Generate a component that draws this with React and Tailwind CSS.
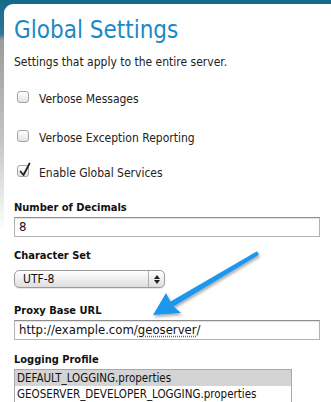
import React from "react"

const font = { fontFamily: '"DejaVu Sans Condensed", "Liberation Sans", Arial, sans-serif' }

const Checkbox = ({ checked }) => (
  <div className="relative w-[12px] h-[12px] shrink-0 rounded-[3px] border border-[#a3a3a3] bg-gradient-to-b from-white to-[#e3e3e3] shadow-[inset_0_1px_0_#fff]">
    {checked && (
      <svg className="absolute left-[0px] top-[-4px]" width="14" height="15" viewBox="0 0 14 15">
        <path d="M2.5 9.5 L5.5 13 L11.5 1.5" fill="none" stroke="#222" strokeWidth="1.8" strokeLinecap="round" strokeLinejoin="round" />
      </svg>
    )}
  </div>
)

const CheckRow = ({ label, checked, className }) => (
  <div className={"flex items-start h-[16px] pl-[3px] " + (className || "")}>
    <Checkbox checked={checked} />
    <span className="ml-[10px] text-[12px] leading-[16px] text-[#222]">{label}</span>
  </div>
)

const Label = ({ children, className }) => (
  <div className={"text-[11px] leading-[14px] font-bold text-[#111] " + (className || "")}>{children}</div>
)

const TextBox = ({ children, className }) => (
  <div className={"h-[20px] w-[306px] border border-[#b3b3b3] border-t-[#8e8e8e] shadow-[inset_0_1px_1px_rgba(0,0,0,0.12)] flex items-center pl-[4px] text-[13px] text-[#111] " + (className || "")}>
    {children}
  </div>
)

export default function App() {
  return (
    <div className="relative w-[331px] h-[402px] overflow-hidden bg-white flex" style={font}>
      <div className="w-[4px] shrink-0 bg-[linear-gradient(to_bottom,#17698a_0px,#2b7897_34px,#9c9c9c_40px,#c4c4c4_140px,#ffffff_230px)]" />
      <div className="flex-1 bg-[linear-gradient(to_bottom,#15698a_0px,#15698a_14px,#ffffff_14px)]">
        <div className="mt-[4px] h-[398px] rounded-tl-[9px] bg-white pl-[10px] pt-[12px]">
          <h1 className="text-[24px] leading-[28px] text-[#1a89c6]">Global Settings</h1>
          <p className="mt-[10px] text-[12px] leading-[16px] text-[#222]">Settings that apply to the entire server.</p>

          <CheckRow className="mt-[21px]" label="Verbose Messages" />
          <CheckRow className="mt-[23px]" label="Verbose Exception Reporting" />
          <CheckRow className="mt-[19px]" label="Enable Global Services" checked />

          <Label className="mt-[20px]">Number of Decimals</Label>
          <TextBox className="mt-[2px]">8</TextBox>

          <Label className="mt-[12px]">Character Set</Label>
          <div className="mt-[7px] h-[18px] w-[151px] rounded-[5px] border border-[#9b9b9b] bg-gradient-to-b from-white to-[#dedede] flex items-center shadow-[0_1px_1px_rgba(0,0,0,0.1)]">
            <span className="flex-1 pl-[8px] text-[12px] text-[#111]">UTF-8</span>
            <div className="w-[16px] h-full border-l border-[#b0b0b0] flex flex-col items-center justify-center gap-[1px]">
              <svg width="6" height="4" viewBox="0 0 6 4"><path d="M3 0 L6 4 L0 4 Z" fill="#222" /></svg>
              <svg width="6" height="4" viewBox="0 0 6 4"><path d="M0 0 L6 0 L3 4 Z" fill="#222" /></svg>
            </div>
          </div>

          <Label className="mt-[16px]">Proxy Base URL</Label>
          <TextBox className="mt-[2px]">
            http://example.com/<span className="underline decoration-dotted decoration-[#e03030] underline-offset-2">geoserver</span>/
          </TextBox>

          <Label className="mt-[13px]">Logging Profile</Label>
          <div className="mt-[2px] w-[278px] border border-[#a8a8a8] text-[11.5px] leading-[16px] text-[#111]">
            <div className="bg-[#d4d4d4] pl-[2px]">DEFAULT_LOGGING.properties</div>
            <div className="pl-[2px]">GEOSERVER_DEVELOPER_LOGGING.properties</div>
            <div className="pl-[2px]">&nbsp;</div>
          </div>
        </div>
      </div>

      <svg className="absolute left-0 top-0 pointer-events-none" width="331" height="402" viewBox="0 0 331 402">
        <defs>
          <filter id="sh" x="-20%" y="-20%" width="140%" height="140%">
            <feDropShadow dx="1" dy="2" stdDeviation="1.6" floodColor="#000" floodOpacity="0.35" />
          </filter>
        </defs>
        <polygon
          points="257,251.3 170.5,301.4 166,293 153,315 181,313 173.5,306.6 259,254.7"
          fill="#1f97ee"
          filter="url(#sh)"
        />
      </svg>
    </div>
  )
}
